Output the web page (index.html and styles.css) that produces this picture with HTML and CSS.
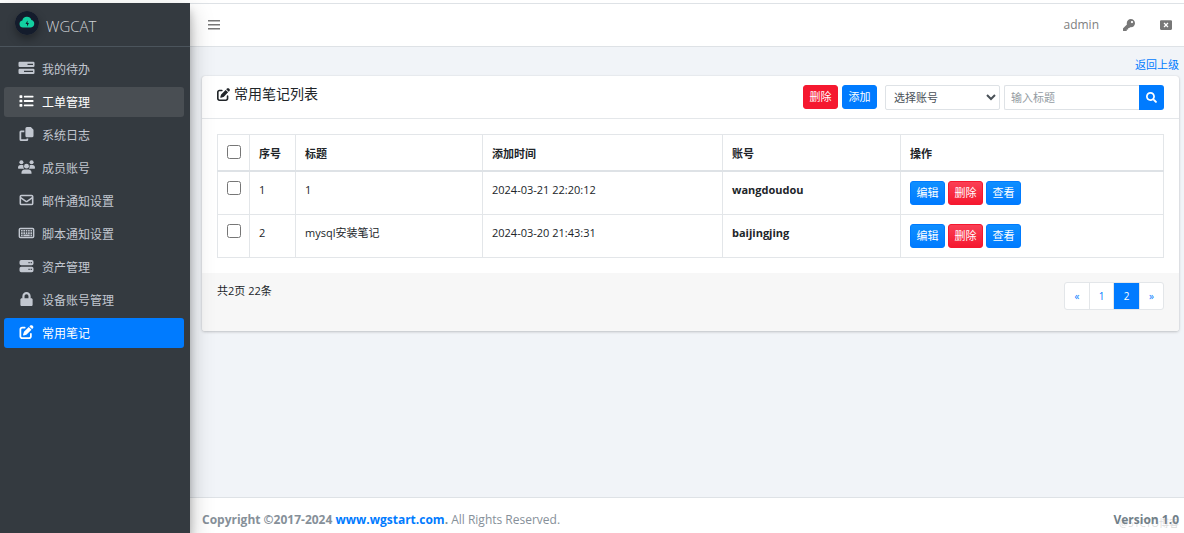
FILE: index.html
```html
<!DOCTYPE html>
<html lang="zh-CN">
<head>
<meta charset="utf-8">
<title>WGCAT</title>
<link rel="stylesheet" href="styles.css">
</head>
<body>
<svg class="sprite" aria-hidden="true">
  <symbol id="i-edit" viewBox="0 0 512 512"><path d="M471.600 21.700c-21.900-21.900-57.300-21.900-79.200 0L362.300 51.700l97.900 97.900 30.100-30.100c21.900-21.900 21.900-57.300 0-79.200L471.600 21.700zm-299.200 220c-6.100 6.100-10.800 13.600-13.500 21.900l-29.600 88.800c-2.900 8.600-.6 18.100 5.800 24.600s15.900 8.700 24.600 5.800l88.800-29.600c8.200-2.700 15.700-7.400 21.900-13.500L437.700 172.300 339.700 74.300 172.400 241.700zM96 64C43 64 0 107 0 160V416c0 53 43 96 96 96H352c53 0 96-43 96-96V320c0-17.700-14.300-32-32-32s-32 14.300-32 32v96c0 17.700-14.300 32-32 32H96c-17.700 0-32-14.300-32-32V160c0-17.700 14.300-32 32-32h96c17.700 0 32-14.300 32-32s-14.300-32-32-32H96z"/></symbol>
  <symbol id="i-tasks" viewBox="0 0 512 448"><path fill-rule="evenodd" d="M40 24h432q40 0 40 40v88q0 40-40 40H40q-40 0-40-40V64q0-40 40-40zm248 64v40h176V88zM40 248h432q40 0 40 40v88q0 40-40 40H40q-40 0-40-40v-88q0-40 40-40zm136 64v40h288v-40z"/></symbol>
  <symbol id="i-list" viewBox="0 0 512 512"><path d="M16 48h72q16 0 16 16v64q0 16-16 16H16q-16 0-16-16V64q0-16 16-16zm0 160h72q16 0 16 16v64q0 16-16 16H16q-16 0-16-16v-64q0-16 16-16zm0 160h72q16 0 16 16v64q0 16-16 16H16q-16 0-16-16v-64q0-16 16-16zM176 62h320q16 0 16 16v36q0 16-16 16H176q-16 0-16-16V78q0-16 16-16zm0 160h320q16 0 16 16v36q0 16-16 16H176q-16 0-16-16v-36q0-16 16-16zm0 160h320q16 0 16 16v36q0 16-16 16H176q-16 0-16-16v-36q0-16 16-16z"/></symbol>
  <symbol id="i-copy" viewBox="0 0 512 512"><path d="M272 0h144l96 96v224q0 56-56 56H272q-56 0-56-56V56q0-56 56-56zM56 128h120v64H64v256h192v-32h64v40q0 56-56 56H56q-56 0-56-56V184q0-56 56-56z"/></symbol>
  <symbol id="i-users" viewBox="0 0 640 512"><circle cx="128" cy="80" r="76"/><circle cx="512" cy="80" r="76"/><circle cx="320" cy="224" r="92"/><path d="M96 184h76q24 0 36 12-24 60 20 124H24q-24 0-24-24 0-112 96-112zm372 0h76q96 0 96 112 0 24-24 24H412q44-64 20-124 12-12 36-12zM248 352h144q112 0 120 136 0 24-24 24H152q-24 0-24-24 8-136 120-136z"/></symbol>
  <symbol id="i-mail" viewBox="0 0 512 512"><rect x="30" y="90" width="452" height="332" rx="40" fill="none" stroke="currentColor" stroke-width="58"/><path d="M40 168l180 132q36 26 72 0l180-132" fill="none" stroke="currentColor" stroke-width="54"/></symbol>
  <symbol id="i-keyboard" viewBox="0 0 576 512"><rect x="26" y="90" width="524" height="332" rx="40" fill="none" stroke="currentColor" stroke-width="52"/><path d="M88 144h60v60H88zm86 0h60v60h-60zm86 0h60v60h-60zm86 0h60v60h-60zm86 0h60v60h-60zM88 228h60v60H88zm86 0h60v60h-60zm86 0h60v60h-60zm86 0h60v60h-60zm86 0h60v60h-60zM88 312h60v60H88zm86 0h232v60H174zm258 0h60v60h-60z"/></symbol>
  <symbol id="i-server" viewBox="0 0 512 512"><path fill-rule="evenodd" d="M64 32h384q64 0 64 64v72q0 64-64 64H64q-64 0-64-64V96q0-64 64-64zm264 76v44h44v-44zm80 0v44h44v-44zM64 280h384q64 0 64 64v72q0 64-64 64H64q-64 0-64-64v-72q0-64 64-64zm264 76v44h44v-44zm80 0v44h44v-44z"/></symbol>
  <symbol id="i-lock" viewBox="0 0 448 512"><path d="M400 224h-24v-72C376 68.200 307.800 0 224 0S72 68.200 72 152v72H48c-26.500 0-48 21.500-48 48v192c0 26.500 21.500 48 48 48h352c26.500 0 48-21.500 48-48V272c0-26.500-21.500-48-48-48zm-104 0H152v-72c0-39.700 32.300-72 72-72s72 32.300 72 72v72z"/></symbol>
  <symbol id="i-bars" viewBox="0 0 12 12"><path d="M0 1h12v1.500H0zm0 4h12v1.500H0zm0 4h12v1.500H0z"/></symbol>
  <symbol id="i-key" viewBox="0 0 512 512"><path d="M512 176c0 97.200-78.800 176-176 176-11.200 0-22.200-1.100-32.800-3.100l-24 27c-4.500 5.100-11.100 8.100-18 8.100H224v40c0 13.300-10.700 24-24 24h-40v40c0 13.300-10.700 24-24 24H24c-13.300 0-24-10.700-24-24v-78.100c0-6.400 2.500-12.500 7-17L168.800 231.200C163 213.800 160 195.200 160 176 160 78.800 238.800 0 336 0s176 78.500 176 176zM336 128c0 26.500 21.500 48 48 48s48-21.500 48-48-21.500-48-48-48-48 21.500-48 48z"/></symbol>
  <symbol id="i-close" viewBox="0 0 512 512"><path fill-rule="evenodd" d="M48 48h416q48 0 48 48v320q0 48-48 48H48q-48 0-48-48V96q0-48 48-48zm142 104-38 38 66 66-66 66 38 38 66-66 66 66 38-38-66-66 66-66-38-38-66 66z"/></symbol>
  <symbol id="i-search" viewBox="0 0 512 512"><path d="M505 442.700L405.300 343c-4.500-4.500-10.600-7-17-7H372c27.600-35.300 44-79.700 44-128C416 93.100 322.900 0 208 0S0 93.100 0 208s93.100 208 208 208c48.300 0 92.700-16.400 128-44v16.300c0 6.400 2.500 12.500 7 17l99.700 99.700c9.400 9.400 24.600 9.400 33.900 0l28.300-28.300c9.400-9.400 9.400-24.600.1-34zM208 336c-70.700 0-128-57.200-128-128 0-70.700 57.200-128 128-128 70.700 0 128 57.200 128 128 0 70.700-57.200 128-128 128z"/></symbol>
</svg>
<div class="app">
  <aside class="sidebar">
    <a class="brand" href="#">
      <svg class="logo" viewBox="0 0 24 24" aria-hidden="true"><circle cx="12" cy="12" r="12" fill="#141c2c"/><path d="M8 16.500a3.600 3.600 0 0 1-.7-7.100 4.800 4.800 0 0 1 9.100-.5A3.900 3.900 0 0 1 16 16.500z" fill="#12cfa0"/><path d="M12.500 9.500 10.500 13h1.500v2.500l2-3.500h-1.500z" fill="#141c2c"/></svg>
      <span>WGCAT</span>
    </a>
    <nav class="menu">
      <a href="#"><svg><use href="#i-tasks"/></svg>我的待办</a>
      <a href="#" class="hover"><svg><use href="#i-list"/></svg>工单管理</a>
      <a href="#"><svg><use href="#i-copy"/></svg>系统日志</a>
      <a href="#"><svg><use href="#i-users"/></svg>成员账号</a>
      <a href="#"><svg><use href="#i-mail"/></svg>邮件通知设置</a>
      <a href="#"><svg><use href="#i-keyboard"/></svg>脚本通知设置</a>
      <a href="#"><svg><use href="#i-server"/></svg>资产管理</a>
      <a href="#"><svg><use href="#i-lock"/></svg>设备账号管理</a>
      <a href="#" class="active"><svg><use href="#i-edit"/></svg>常用笔记</a>
    </nav>
  </aside>
  <div class="page">
    <header class="topbar">
      <button class="icon-btn" aria-label="菜单"><svg><use href="#i-bars"/></svg></button>
      <div class="topbar-right">
        <a href="#">admin</a>
        <button class="icon-btn" aria-label="修改密码"><svg><use href="#i-key"/></svg></button>
        <button class="icon-btn" aria-label="退出"><svg><use href="#i-close"/></svg></button>
      </div>
    </header>
    <main class="content">
      <a class="back" href="#">返回上级</a>
      <section class="card">
        <div class="card-header">
          <h1><svg><use href="#i-edit"/></svg>常用笔记列表</h1>
          <form class="tools">
            <button type="button" class="btn danger">删除</button>
            <button type="button" class="btn primary">添加</button>
            <select aria-label="选择账号"><option>选择账号</option></select>
            <div class="search">
              <input type="text" placeholder="输入标题" aria-label="输入标题">
              <button type="button" aria-label="搜索"><svg><use href="#i-search"/></svg></button>
            </div>
          </form>
        </div>
        <div class="card-body">
          <table>
            <colgroup><col class="c-check"><col class="c-no"><col class="c-title"><col class="c-time"><col class="c-user"><col></colgroup>
            <thead>
              <tr><th><input type="checkbox" aria-label="全选"></th><th>序号</th><th>标题</th><th>添加时间</th><th>账号</th><th>操作</th></tr>
            </thead>
            <tbody>
              <tr><td><input type="checkbox" aria-label="选择第1行"></td><td>1</td><td>1</td><td>2024-03-21 22:20:12</td><td><b>wangdoudou</b></td><td><div class="actions"><button class="btn primary shaded">编辑</button><button class="btn danger shaded">删除</button><button class="btn primary shaded">查看</button></div></td></tr>
              <tr><td><input type="checkbox" aria-label="选择第2行"></td><td>2</td><td>mysql安装笔记</td><td>2024-03-20 21:43:31</td><td><b>baijingjing</b></td><td><div class="actions"><button class="btn primary shaded">编辑</button><button class="btn danger shaded">删除</button><button class="btn primary shaded">查看</button></div></td></tr>
            </tbody>
          </table>
        </div>
        <div class="card-footer">
          <span>共2页 22条</span>
          <nav class="pager" aria-label="分页"><a href="#">«</a><a href="#">1</a><a href="#" class="current">2</a><a href="#">»</a></nav>
        </div>
      </section>
    </main>
    <footer class="footer">
      <div><strong>Copyright ©2017-2024 <a href="#">www.wgstart.com</a>.</strong> All Rights Reserved.</div>
      <div class="version"><b>Version 1.0</b><span class="watermark">@51CTO博客</span></div>
    </footer>
  </div>
</div>
</body>
</html>
```
FILE: styles.css
```css
* { box-sizing: border-box; }
body {
  margin: 0;
  font: 11px/18px "Open Sans", "Noto Sans CJK SC", sans-serif;
  color: #212529;
  background: #fff;
}
a { text-decoration: none; color: #007bff; }
button, input, select { font: inherit; }
button { cursor: pointer; }
svg { fill: currentColor; }
.sprite { position: absolute; width: 0; height: 0; }

.app { display: flex; min-height: 100vh; padding-top: 3px; }

.sidebar {
  position: relative;
  z-index: 1;
  flex: 0 0 190px;
  background: #343a40;
  color: #c2c7d0;
  box-shadow: 0 10px 22px rgba(0,0,0,.25), 0 8px 8px rgba(0,0,0,.22);
}
.brand {
  display: flex;
  align-items: center;
  gap: 7px;
  height: 44px;
  padding-left: 15px;
  border-bottom: 1px solid #4b545c;
  color: #d0d3d6;
  font-size: 15px;
  font-weight: 300;
  line-height: 24px;
}
.brand span { padding-top: 2px; }
.logo { width: 24px; height: 24px; margin-bottom: 3px; border-radius: 50%; box-shadow: 0 4px 8px rgba(0,0,0,.35); }
.menu { display: flex; flex-direction: column; gap: 3px; padding: 7px 6px 0 4px; }
.menu a {
  display: flex;
  align-items: center;
  gap: 7px;
  height: 30px;
  padding: 1px 0 0 14px;
  border-radius: 3px;
  color: #c2c7d0;
  font-size: 12px;
}
.menu svg { width: 17px; height: 14px; margin-bottom: 4px; }
.menu .hover { background: #494e53; color: #fff; }
.menu .active { background: #007bff; color: #fff; }

.page { flex: 1; min-width: 0; display: flex; flex-direction: column; border-top: 1px solid #dee2e6; }
.topbar {
  display: flex;
  align-items: center;
  justify-content: space-between;
  height: 43px;
  padding: 0 11px 0 17px;
  border-bottom: 1px solid #dee2e6;
}
.topbar-right { display: flex; align-items: center; gap: 23px; font-size: 12px; }
.topbar a { color: #808080; }
.icon-btn { display: flex; padding: 0; border: 0; background: none; color: #777; }
.icon-btn svg { width: 14px; height: 12px; }

.content { flex: 1; padding: 9px 5px 0 12px; background: #f1f4f8; }
.back { display: block; text-align: right; line-height: 18px; margin-bottom: 2px; }
.card { background: #fff; border-radius: 3px; box-shadow: 0 0 1px rgba(0,0,0,.13), 0 1px 3px rgba(0,0,0,.2); }
.card-header {
  display: flex;
  justify-content: space-between;
  align-items: flex-start;
  padding: 9px 15px;
  height: 43px;
  border-bottom: 1px solid #e4e7ea;
}
h1 { display: flex; align-items: center; gap: 4px; margin: 0; font-size: 14px; font-weight: 400; line-height: 18px; }
h1 svg { width: 13px; height: 13px; }
.tools { display: flex; gap: 4px; }
.btn { width: 35px; height: 24px; padding: 0; border: 1px solid; border-radius: 3px; color: #fff; line-height: 20px; }
.primary { background: #007bff; border-color: #007bff; }
.danger { background: #f5182f; border-color: #f5182f; }
.primary.shaded { background: linear-gradient(#0f8fff, #007bff); }
.danger.shaded { background: linear-gradient(#fa4055, #f5182f); }
select {
  width: 115px;
  height: 25px;
  margin-left: 4px;
  padding: 0 4px;
  border: 1px solid #dee2e6;
  border-radius: 2px;
  background: #fff;
  color: #495057;
}
.search { display: flex; height: 25px; }
.search input { width: 135px; padding: 0 6px; border: 1px solid #dee2e6; border-right: 0; border-radius: 2px 0 0 2px; }
.search input::placeholder { color: #939ba2; }
.search button { display: flex; align-items: center; justify-content: center; width: 25px; padding: 0; border: 0; border-radius: 0 3px 3px 0; background: #007bff; color: #fff; }
.search svg { width: 11px; height: 11px; }

.card-body { padding: 15px; }
table { width: 100%; border-collapse: collapse; table-layout: fixed; }
th, td { border: 1px solid #e3e6e9; text-align: left; vertical-align: top; padding: 9px; }
th { padding: 10px 9px 7px; border-bottom: 2px solid #dee2e6; }
td { height: 43px; }
.c-check { width: 32px; }
.c-no { width: 46px; }
.c-title { width: 187px; }
.c-time { width: 240px; }
.c-user { width: 178px; }
input[type="checkbox"] { display: block; width: 14px; height: 14px; margin: 0; }
.actions { display: flex; gap: 3px; }

.card-footer {
  display: flex;
  justify-content: space-between;
  align-items: flex-start;
  height: 58px;
  padding: 9px 15px;
  background: #f7f7f7;
  border-radius: 0 0 3px 3px;
}
.pager { display: flex; border: 1px solid #e3e6e9; border-radius: 3px; background: #fff; font-size: 10px; }
.pager a { width: 24px; line-height: 26px; text-align: center; }
.pager a + a { border-left: 1px solid #e3e6e9; }
.pager .current { width: 26px; background: #007bff; color: #fff; }

.footer {
  display: flex;
  justify-content: space-between;
  padding: 13px 5px 4px 12px;
  border-top: 1px solid #dee2e6;
  color: #869099;
  font-size: 12px;
}
.version { position: relative; color: #6f7e88; }
.watermark { position: absolute; right: 0; top: 3px; font-size: 10px; white-space: nowrap; color: rgba(150,150,150,.35); }
```
